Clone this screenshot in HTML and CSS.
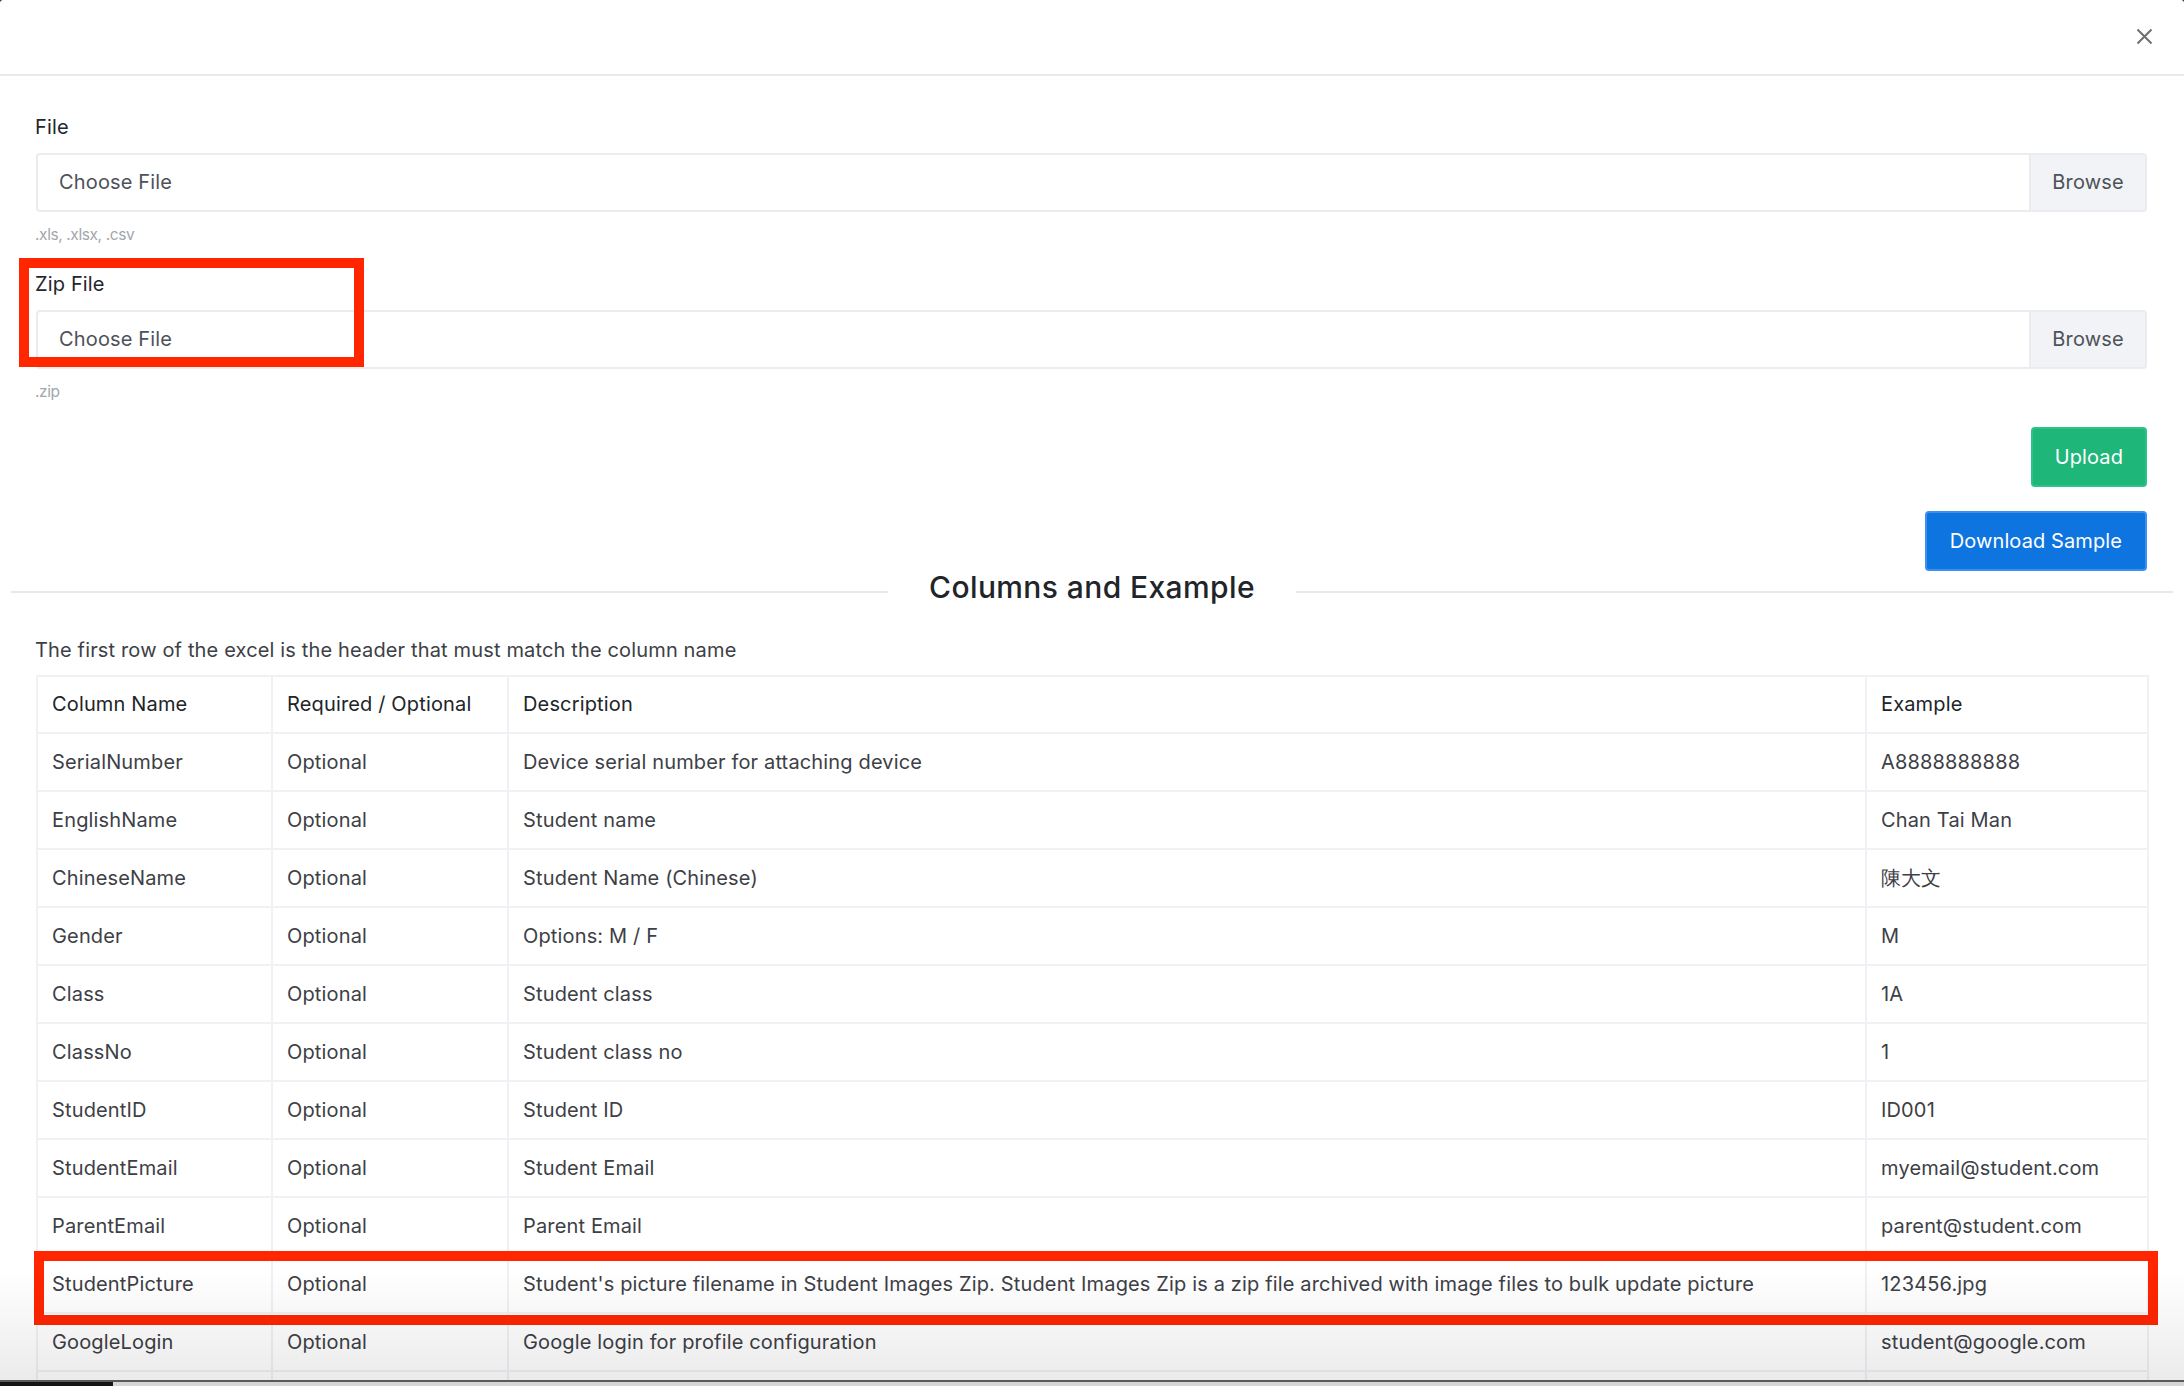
FILE: index.html
```html
<!DOCTYPE html>
<html lang="en">
<head>
  <meta charset="UTF-8" />
  <title>Import Students</title>
  <link rel="stylesheet" href="styles.css">
</head>
<body>

  <div class="modal">
    <div class="modal-header">
      <button class="close" aria-label="Close">
        <svg width="17" height="17" viewBox="0 0 17 17">
          <path d="M1.5 1.5 L15.5 15.5 M15.5 1.5 L1.5 15.5" stroke="#6f6f6f" stroke-width="2" fill="none"/>
        </svg>
      </button>
    </div>

    <div class="modal-body">
      <!-- Upload form -->
      <div class="form-group">
        <label>File</label>
        <div class="input-group">
          <span class="file-name">Choose File</span>
          <span class="browse">Browse</span>
        </div>
        <small class="help">.xls, .xlsx, .csv</small>
      </div>

      <div class="form-group">
        <label>Zip File</label>
        <div class="input-group">
          <span class="file-name">Choose File</span>
          <span class="browse">Browse</span>
        </div>
        <small class="help">.zip</small>
      </div>

      <div class="actions">
        <button class="btn btn-success">Upload</button>
      </div>
      <div class="actions">
        <button class="btn btn-primary">Download Sample</button>
      </div>

      <div class="divider"><span>Columns and Example</span></div>

      <p class="intro">The first row of the excel is the header that must match the column name</p>

      <table class="columns">
        <colgroup>
          <col class="c-name">
          <col class="c-req">
          <col class="c-desc">
          <col class="c-example">
        </colgroup>
        <thead>
          <tr>
            <th>Column Name</th>
            <th>Required / Optional</th>
            <th>Description</th>
            <th>Example</th>
          </tr>
        </thead>
        <tbody>
          <tr><td>SerialNumber</td><td>Optional</td><td>Device serial number for attaching device</td><td>A8888888888</td></tr>
          <tr><td>EnglishName</td><td>Optional</td><td>Student name</td><td>Chan Tai Man</td></tr>
          <tr><td>ChineseName</td><td>Optional</td><td>Student Name (Chinese)</td><td>陳大文</td></tr>
          <tr><td>Gender</td><td>Optional</td><td>Options: M / F</td><td>M</td></tr>
          <tr><td>Class</td><td>Optional</td><td>Student class</td><td>1A</td></tr>
          <tr><td>ClassNo</td><td>Optional</td><td>Student class no</td><td>1</td></tr>
          <tr><td>StudentID</td><td>Optional</td><td>Student ID</td><td>ID001</td></tr>
          <tr><td>StudentEmail</td><td>Optional</td><td>Student Email</td><td>myemail@student.com</td></tr>
          <tr><td>ParentEmail</td><td>Optional</td><td>Parent Email</td><td>parent@student.com</td></tr>
          <tr><td>StudentPicture</td><td>Optional</td><td>Student's picture filename in Student Images Zip. Student Images Zip is a zip file archived with image files to bulk update picture</td><td>123456.jpg</td></tr>
          <tr><td>GoogleLogin</td><td>Optional</td><td>Google login for profile configuration</td><td>student@google.com</td></tr>
          <tr><td>&nbsp;</td><td>&nbsp;</td><td>&nbsp;</td><td>&nbsp;</td></tr>
        </tbody>
      </table>
    </div>
  </div>

  <!-- annotation boxes -->
  <div class="mark mark-zip"></div>
  <div class="mark mark-row"></div>

  <div class="fade"></div>
  <div class="dock"></div>

</body>
</html>
```

FILE: styles.css
```css
* {
  margin: 0;
  padding: 0;
  box-sizing: border-box;
}

html {
  background: #1e1e1e;
}

body {
  font-family: Inter, 'Open Sans', sans-serif;
  font-size: 20px;
  letter-spacing: 0.15px;
  line-height: 29px;
  color: #3d4046;
  height: 1386px;
  overflow: hidden;
}

.modal {
  background: #fff;
  border-radius: 3px 3px 0 0;
  min-height: 100%;
}

.modal-header {
  height: 76px;
  border-bottom: 2px solid #e9eaef;
  display: flex;
  justify-content: flex-end;
  align-items: center;
  padding: 0 31px 2px 0;
}

.close {
  background: none;
  border: none;
  width: 17px;
  height: 17px;
  display: flex;
}

.modal-body {
  padding: 37px 37px 0 35px;
}

/* form */
.form-group {
  margin-bottom: 23px;
}

.form-group label {
  display: block;
  color: #23262b;
  margin-bottom: 11px;
}

.input-group {
  display: flex;
  height: 59px;
  border: 2px solid #ebecf0;
  border-radius: 4px;
  margin-left: 1px;
}

.file-name {
  flex: 1;
  display: flex;
  align-items: center;
  padding-left: 21px;
  color: #4d5259;
}

.browse {
  width: 116px;
  display: flex;
  align-items: center;
  justify-content: center;
  background: #f2f3f7;
  border-left: 2px solid #ebecf0;
  color: #4d5259;
}

.help {
  display: block;
  margin-top: 10px;
  font-size: 15.5px;
  letter-spacing: -0.4px;
  line-height: 25px;
  color: #a3a6ab;
}

.actions {
  display: flex;
  justify-content: flex-end;
  margin-bottom: 24px;
}

.btn {
  font-family: inherit;
  font-size: 20px;
  letter-spacing: 0.1px;
  height: 60px;
  padding: 0 22px;
  border-radius: 4px;
  color: #fff;
  cursor: pointer;
}

.btn-success {
  background: #1eb679;
  border: 2px solid #2cc38a;
}

.btn-primary {
  background: #0e74df;
  border: 2px solid #3b90f0;
  padding: 0 23px;
}

/* divider */
.divider {
  display: flex;
  align-items: center;
  margin: -25px -26px 22px -24px;
  height: 44px;
}

.divider::before,
.divider::after {
  content: "";
  flex: 1;
  height: 2px;
  background: #e8e9ef;
}

.divider span {
  padding: 0 41px;
  font-size: 30px;
  letter-spacing: 0.4px;
  font-weight: 500;
  color: #212428;
  margin-top: -10px;
}

.intro {
  margin-bottom: 10px;
}

/* table */
.columns {
  width: 2111px;
  margin-left: 1px;
  border-collapse: collapse;
  table-layout: fixed;
}

.c-name { width: 235px; }
.c-req { width: 236px; }
.c-desc { width: 1358px; }
.c-example { width: 282px; }

.columns th,
.columns td {
  border: 2px solid #f0f1f5;
  padding: 14px 14px;
  line-height: 28px;
  text-align: left;
  font-weight: 400;
  white-space: nowrap;
}

.columns th {
  color: #212428;
  padding: 13px 14px 14px;
}

/* overlays */
.mark {
  position: absolute;
  border: 10px solid #ff2600;
  pointer-events: none;
}

.mark-zip {
  left: 19px;
  top: 258px;
  width: 345px;
  height: 109px;
}

.mark-row {
  left: 34px;
  top: 1251px;
  width: 2124px;
  height: 74px;
}

.fade {
  position: fixed;
  left: 0;
  right: 0;
  bottom: 6px;
  height: 110px;
  background: linear-gradient(rgba(0, 0, 0, 0), rgba(0, 0, 0, 0.08));
  pointer-events: none;
}

.dock {
  position: fixed;
  left: 0;
  right: 0;
  bottom: 0;
  height: 6px;
  border-top: 2px solid #5a5a5a;
  background: linear-gradient(to right, #151515 113px, #d6d6d6 113px);
}
```
